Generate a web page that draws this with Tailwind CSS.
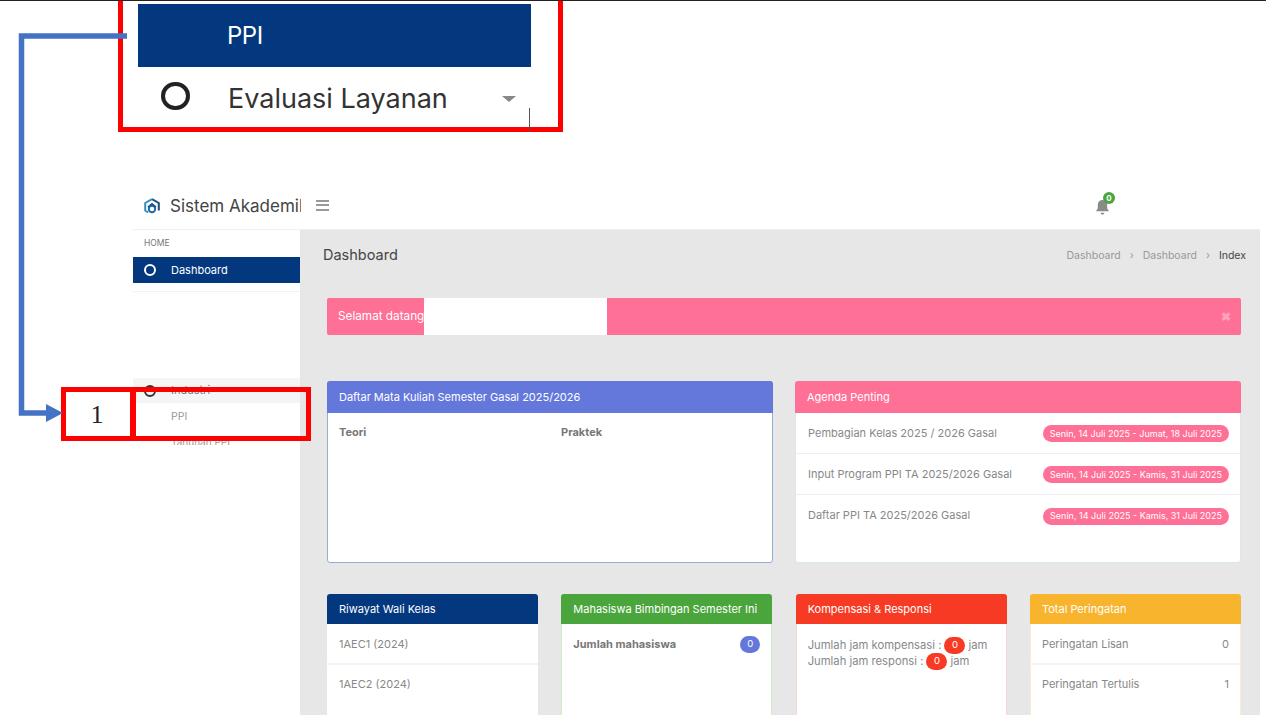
<!DOCTYPE html>
<html lang="en">
<head>
  <meta charset="UTF-8" />
  <title>Sistem Akademik</title>
  <script src="https://cdn.jsdelivr.net/npm/@tailwindcss/browser@4"></script>
</head>
<body class="bg-white font-['Inter','Liberation_Sans',sans-serif] text-[#555]">
<div class="relative w-[1266px] h-[719px] overflow-hidden bg-white border-t border-[#222]">

  <!-- cropped menu shown above the app -->
  <div class="h-[184px] pl-[138px] pt-[3px]">
    <div class="w-[393px]">
      <div class="h-[63px] bg-[#03387f] flex items-center pl-[89px] text-white text-[24px] tracking-[-0.5px]">PPI</div>
      <div class="h-[63px] flex items-center text-[#333]">
        <span class="ml-[23px] mb-[6px] w-[29px] h-[28px] rounded-full border-[4px] border-[#222]"></span>
        <span class="ml-[38px] text-[27px] leading-none whitespace-nowrap">Evaluasi Layanan</span>
        <span class="ml-auto mr-[15px] w-0 h-0 border-x-[7px] border-x-transparent border-t-[6px] border-t-[#888]"></span>
      </div>
    </div>
  </div>

  <!-- app -->
  <div class="ml-[133px] w-[1127px] h-[530px] flex flex-col">
    <header class="h-[44px] shrink-0 flex items-center bg-white">
      <svg class="ml-[11px] mb-[2px] w-[16px] h-[17px]" viewBox="0 0 16 17" fill="none">
        <path d="M8 1.200 14.800 5v7.500" stroke="#1d4f7c" stroke-width="2"/>
        <path d="M8 1.200 1.200 5v7.500l3 2" stroke="#3b8ec4" stroke-width="2"/>
        <circle cx="8" cy="11" r="3.200" stroke="#1d6ea8" stroke-width="2"/>
        <path d="M4 9 8 5.800l4 3.200" stroke="#1d4f7c" stroke-width="1.500"/>
      </svg>
      <div class="ml-[10px] mb-[1px] w-[131px] overflow-hidden whitespace-nowrap text-[17px] text-[#444]">Sistem Akademik</div>
      <div class="ml-[15px] mb-[4px] w-[13px] flex flex-col gap-[2.500px]">
        <span class="h-[2px] bg-[#999]"></span>
        <span class="h-[2px] bg-[#999]"></span>
        <span class="h-[2px] bg-[#999]"></span>
      </div>
      <div class="relative ml-[766px] mb-[1px]">
        <svg class="w-[15px] h-[16px]" viewBox="0 0 16 17" fill="#8a8a8a">
          <path d="M8 1a5 5 0 0 0-5 5v4l-2 3h14l-2-3V6a5 5 0 0 0-5-5z"/>
          <path d="M6 14.500a2 2 0 0 0 4 0z"/>
        </svg>
        <span class="absolute -top-[7px] left-[8px] w-[12px] h-[12px] rounded-full bg-[#4aa53c] text-white text-[8px] font-bold flex items-center justify-center">0</span>
      </div>
    </header>

    <div class="flex flex-1 min-h-0">
      <!-- sidebar -->
      <aside class="w-[167px] shrink-0 bg-white border-t border-[#f0f0f0]">
        <div class="h-[27px] pl-[11px] pt-[7px] text-[8.500px] text-[#777]">HOME</div>
        <div class="h-[26px] bg-[#03387f] flex items-center text-white text-[11px]">
          <span class="ml-[11px] w-[12px] h-[12px] rounded-full border-2 border-white"></span>
          <span class="ml-[15px]">Dashboard</span>
        </div>
        <div class="mt-[8px] h-px bg-[#f2f2f2]"></div>
        <div class="mt-[86px] h-[25px] bg-[#f5f5f5] flex items-center text-[11px] text-[#777]">
          <span class="ml-[11px] w-[12px] h-[12px] rounded-full border-2 border-[#333]"></span>
          <span class="ml-[15px]">Industri</span>
        </div>
        <div class="h-[26px] pl-[38px] pt-[1px] flex items-center text-[10.500px] text-[#999]">PPI</div>
        <div class="pl-[38px] pt-[6px] text-[10px] text-[#999]">Tahunan PPI</div>
      </aside>

      <!-- content -->
      <main class="flex-1 bg-[#e7e7e7] overflow-hidden border-t border-[#f0f0f0]">
        <div class="h-[68px] flex items-center justify-between pl-[23px] pr-[14px] pb-[18px]">
          <h1 class="text-[14.500px] text-[#444]">Dashboard</h1>
          <div class="flex items-center text-[10.500px] text-[#999] pt-[1px]">
            <span>Dashboard</span><span class="mx-[9px]">›</span><span>Dashboard</span><span class="mx-[9px]">›</span><span class="text-[#444]">Index</span>
          </div>
        </div>

        <div class="ml-[27px] w-[914px]">
          <div class="h-[37px] rounded-[2px] bg-[#ff7096] flex items-center justify-between pl-[11px] pr-[10px] text-white text-[11.750px]">
            <span>Selamat datang</span>
            <span class="text-[#ffa3bb] text-[12px] font-bold">✖</span>
          </div>

          <div class="mt-[46px] flex justify-between">
            <section class="w-[446px] h-[182px] rounded-[3px] bg-white border border-[#8fb0d8]">
              <div class="h-[32px] -mt-px -mx-px rounded-t-[3px] bg-[#6478dc] flex items-center pl-[12px] text-white text-[11px]">Daftar Mata Kuliah Semester Gasal 2025/2026</div>
              <div class="flex pl-[11px] pt-[11px] text-[11px] font-bold text-[#777]">
                <span class="w-[222px]">Teori</span>
                <span>Praktek</span>
              </div>
            </section>
            <section class="w-[446px] h-[182px] rounded-[3px] bg-white border border-[#d8e8ee]">
              <div class="h-[32px] -mt-px -mx-px rounded-t-[3px] bg-[#ff7096] flex items-center pl-[12px] text-white text-[11px]">Agenda Penting</div>
              <div class="h-[41px] flex items-center justify-between pl-[12px] pr-[11px] border-b border-[#eee] text-[11px] text-[#888]">
                <span>Pembagian Kelas 2025 / 2026 Gasal</span>
                <span class="h-[17px] px-[7px] mt-[1px] rounded-full bg-[#ff7096] text-white text-[9px] flex items-center">Senin, 14 Juli 2025 - Jumat, 18 Juli 2025</span>
              </div>
              <div class="h-[41px] flex items-center justify-between pl-[12px] pr-[11px] border-b border-[#eee] text-[11px] text-[#888]">
                <span>Input Program PPI TA 2025/2026 Gasal</span>
                <span class="h-[17px] px-[7px] mt-[1px] rounded-full bg-[#ff7096] text-white text-[9px] flex items-center">Senin, 14 Juli 2025 - Kamis, 31 Juli 2025</span>
              </div>
              <div class="h-[41px] flex items-center justify-between pl-[12px] pr-[11px] text-[11px] text-[#888]">
                <span>Daftar PPI TA 2025/2026 Gasal</span>
                <span class="h-[17px] px-[7px] mt-[1px] rounded-full bg-[#ff7096] text-white text-[9px] flex items-center">Senin, 14 Juli 2025 - Kamis, 31 Juli 2025</span>
              </div>
            </section>
          </div>

          <div class="mt-[31px] flex justify-between">
            <section class="w-[211px] h-[140px] rounded-[3px] bg-white">
              <div class="h-[30px] rounded-t-[3px] bg-[#03387f] flex items-center pl-[12px] text-white text-[11px]">Riwayat Wali Kelas</div>
              <div class="h-[41px] pt-[1px] flex items-center pl-[12px] border-b-2 border-[#f3f3f3] text-[11px] text-[#888]">1AEC1 (2024)</div>
              <div class="h-[38px] flex items-center pl-[12px] text-[11px] text-[#888]">1AEC2 (2024)</div>
            </section>
            <section class="w-[211px] h-[140px] rounded-[3px] bg-white border border-[#d3ecca]">
              <div class="h-[30px] -mt-px -mx-px rounded-t-[3px] bg-[#4aa53c] flex items-center pl-[12px] text-white text-[11px] whitespace-nowrap">Mahasiswa Bimbingan Semester Ini</div>
              <div class="flex items-center justify-between pl-[11px] pr-[11px] pt-[12px] text-[11px] font-bold text-[#777]">
                <span>Jumlah mahasiswa</span>
                <span class="w-[20px] h-[17px] rounded-full bg-[#6478dc] text-white text-[9.500px] font-normal flex items-center justify-center">0</span>
              </div>
            </section>
            <section class="w-[211px] h-[140px] rounded-[3px] bg-white border border-[#f6d8d5]">
              <div class="h-[30px] -mt-px -mx-px rounded-t-[3px] bg-[#f73a24] flex items-center pl-[12px] text-white text-[11px]">Kompensasi &amp; Responsi</div>
              <div class="pl-[11px] pt-[13px] text-[11.250px] text-[#888]">
                <div class="h-[16px] flex items-center whitespace-nowrap">Jumlah jam kompensasi :<span class="mx-[3px] w-[21px] h-[17px] shrink-0 rounded-full bg-[#f73a24] text-white text-[9.500px] flex items-center justify-center">0</span>jam</div>
                <div class="h-[16px] flex items-center whitespace-nowrap">Jumlah jam responsi :<span class="mx-[3px] w-[21px] h-[17px] shrink-0 rounded-full bg-[#f73a24] text-white text-[9.500px] flex items-center justify-center">0</span>jam</div>
              </div>
            </section>
            <section class="w-[211px] h-[140px] rounded-[3px] bg-white border border-[#fdeccb]">
              <div class="h-[30px] -mt-px -mx-px rounded-t-[3px] bg-[#f8b42c] flex items-center pl-[12px] text-white text-[11px]">Total Peringatan</div>
              <div class="h-[41px] pt-[1px] flex items-center justify-between px-[11px] border-b-2 border-[#f3f3f3] text-[11px] text-[#888]"><span>Peringatan Lisan</span><span>0</span></div>
              <div class="h-[38px] flex items-center justify-between px-[11px] text-[11px] text-[#888]"><span>Peringatan Tertulis</span><span>1</span></div>
            </section>
          </div>
        </div>
      </main>
    </div>
  </div>

  <!-- annotations drawn over the screenshot -->
  <div class="absolute left-[424px] top-[297px] w-[183px] h-[37px] bg-white"></div>
  <div class="absolute left-[133px] top-[444px] w-[167px] h-[274px] bg-white"></div>
  <div class="absolute left-[118px] -top-[6px] w-[445px] h-[137px] border-[5px] border-[#ff0000]"></div>
  <div class="absolute left-[529px] top-[107px] w-px h-[23px] bg-[#555]"></div>
  <div class="absolute left-[131px] top-[386px] w-[180px] h-[54px] border-[5px] border-[#ff0000]"></div>
  <div class="absolute left-[61px] top-[386px] w-[74px] h-[54px] border-[5px] border-[#ff0000] bg-white flex items-center justify-center pt-[1px] pr-[2px] font-['Liberation_Serif',serif] text-[26px] text-[#222]">1</div>
  <svg class="absolute left-0 top-0 w-[140px] h-[430px]" viewBox="0 0 140 430" fill="none">
    <path d="M127 35H21.500V412H48" stroke="#4472c4" stroke-width="5.500"/>
    <path d="M46 403 63 412 46 421z" fill="#4472c4"/>
  </svg>
</div>
</body>
</html>
